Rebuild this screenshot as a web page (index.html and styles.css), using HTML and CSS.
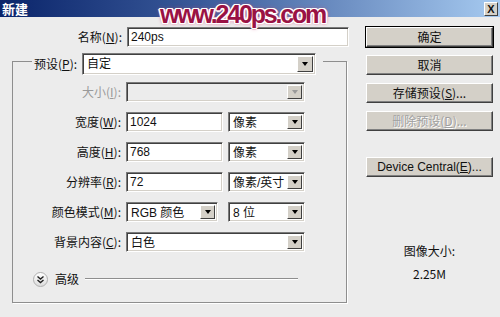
FILE: index.html
```html
<!DOCTYPE html>
<html lang="zh-CN">
<head>
    <meta charset="UTF-8">
    <title>新建</title>
    <link rel="stylesheet" href="styles.css">
</head>
<body>
    <div class="dialog">
        <div class="titlebar">
            <span class="title">新建</span>
            <span class="close-btn">X</span>
        </div>
        <div class="watermark">www.240ps.com</div>

        <div class="content">
            <div class="form">
                <div class="name-row">
                    <label>名称(<u>N</u>):</label>
                    <div class="field">240ps</div>
                </div>

                <fieldset class="group">
                    <legend class="preset">
                        <label>预设(<u>P</u>):</label>
                        <div class="select wide-preset">
                            <span class="value">自定</span>
                            <span class="arrow"></span>
                        </div>
                    </legend>

                    <div class="rows">
                        <label class="disabled">大小(<u>I</u>):</label>
                        <div class="select span2 is-disabled">
                            <span class="value"></span>
                            <span class="arrow"></span>
                        </div>

                        <label>宽度(<u>W</u>):</label>
                        <div class="field">1024</div>
                        <div class="select">
                            <span class="value">像素</span>
                            <span class="arrow"></span>
                        </div>

                        <label>高度(<u>H</u>):</label>
                        <div class="field">768</div>
                        <div class="select">
                            <span class="value">像素</span>
                            <span class="arrow"></span>
                        </div>

                        <label>分辨率(<u>R</u>):</label>
                        <div class="field">72</div>
                        <div class="select">
                            <span class="value">像素/英寸</span>
                            <span class="arrow"></span>
                        </div>

                        <label>颜色模式(<u>M</u>):</label>
                        <div class="select narrow">
                            <span class="value">RGB 颜色</span>
                            <span class="arrow"></span>
                        </div>
                        <div class="select">
                            <span class="value">8 位</span>
                            <span class="arrow"></span>
                        </div>

                        <label>背景内容(<u>C</u>):</label>
                        <div class="select span2">
                            <span class="value">白色</span>
                            <span class="arrow"></span>
                        </div>
                    </div>

                    <div class="advanced">
                        <span class="toggle">
                            <svg width="9" height="9" viewBox="0 0 9 9">
                                <path d="M1.5 1.5 L4.5 4 L7.5 1.5 M1.5 5 L4.5 7.5 L7.5 5" fill="none" stroke="#222" stroke-width="1.4"/>
                            </svg>
                        </span>
                        <span class="adv-label">高级</span>
                        <span class="adv-line"></span>
                    </div>
                </fieldset>
            </div>

            <div class="actions">
                <div class="btn default">确定</div>
                <div class="btn">取消</div>
                <div class="btn">存储预设(<u>S</u>)...</div>
                <div class="btn disabled">删除预设(<u>D</u>)...</div>
                <div class="btn device">Device Central(<u>E</u>)...</div>

                <div class="image-size">
                    <p>图像大小:</p>
                    <p>2.25M</p>
                </div>
            </div>
        </div>
    </div>
</body>
</html>
```

FILE: styles.css
```css
body {
    margin: 0;
    background-color: #ececec;
    font-family: "Liberation Sans", "Noto Sans CJK SC", sans-serif;
    font-size: 12px;
    color: #111;
}
.dialog {
    position: relative;
    width: 500px;
    height: 317px;
    overflow: hidden;
    background-color: #ececec;
}
.titlebar {
    height: 17px;
    display: flex;
    align-items: center;
    justify-content: space-between;
    padding: 0 2px 0 2px;
    background: linear-gradient(to right, #0a246a 0%, #3a5a9a 40%, #a6caf0 100%);
}
.title {
    color: white;
    font-weight: bold;
    font-family: "Noto Sans CJK SC", sans-serif;
    font-size: 13px;
    line-height: 17px;
}
.close-btn {
    width: 12px;
    height: 12px;
    line-height: 12px;
    text-align: center;
    font-size: 11px;
    font-weight: bold;
    background-color: #d4d0c8;
    border: 1px solid;
    border-color: #fff #404040 #404040 #fff;
}
.watermark {
    position: absolute;
    left: 160px;
    top: 0;
    font-family: "Liberation Sans", sans-serif;
    font-weight: bold;
    font-size: 25px;
    line-height: 28px;
    letter-spacing: -2.2px;
    color: #9a1244;
    text-shadow: 1px 0 #fff, -1px 0 #fff, 0 1px #fff, 0 -1px #fff,
        1px 1px #fff, -1px -1px #fff, 1px -1px #fff, -1px 1px #fff,
        2px 0 #f3c8d6, -2px 0 #f3c8d6, 0 2px #f3c8d6,
        0 0 4px #c0507a;
}
.content {
    display: flex;
    padding-top: 10px;
}
.form {
    width: 366px;
}
label {
    font-family: "Noto Sans CJK SC", sans-serif;
    font-size: 12px;
    line-height: 20px;
    text-align: right;
    white-space: nowrap;
}
label.disabled {
    color: #9a9a9a;
}
.name-row {
    display: grid;
    grid-template-columns: 122px 222px;
    column-gap: 5px;
    height: 20px;
}
.field {
    height: 20px;
    box-sizing: border-box;
    background-color: white;
    border: 1px solid;
    border-color: #7a7a7a #fff #fff #7a7a7a;
    box-shadow: inset 1px 1px 0 #404040, inset -1px -1px 0 #d4d0c8;
    padding: 0 3px;
    line-height: 18px;
    font-family: "Liberation Sans", "Noto Sans CJK SC", sans-serif;
    font-size: 12px;
}
.select {
    height: 20px;
    box-sizing: border-box;
    display: flex;
    background-color: white;
    border: 1px solid;
    border-color: #7a7a7a #fff #fff #7a7a7a;
    box-shadow: inset 1px 1px 0 #404040, inset -1px -1px 0 #d4d0c8;
    padding: 2px;
}
.select .value {
    flex: 1;
    padding-left: 2px;
    line-height: 16px;
    font-family: "Liberation Sans", "Noto Sans CJK SC", sans-serif;
    font-size: 12px;
    white-space: nowrap;
    overflow: hidden;
}
.select .arrow {
    width: 15px;
    box-sizing: border-box;
    background-color: #d4d0c8;
    border: 1px solid;
    border-color: #fff #404040 #404040 #fff;
    display: flex;
    align-items: center;
    justify-content: center;
}
.select .arrow::after {
    content: "";
    border-left: 3px solid transparent;
    border-right: 3px solid transparent;
    border-top: 4px solid #000;
}
.select.is-disabled {
    background-color: #ececec;
}
.select.is-disabled .arrow::after {
    border-top-color: #9a9a9a;
}
.group {
    margin: 6px 0 0 12px;
    padding: 0 0 16px 0;
    width: 335px;
    box-sizing: border-box;
    border: 1px solid #8e8e8e;
    box-shadow: 1px 1px 0 #fff;
    min-width: 0;
}
.preset {
    margin-left: 19px;
    padding: 0 7px 0 2px;
    height: 16px;
    display: flex;
    align-items: flex-start;
    column-gap: 5px;
}
.preset label {
    line-height: 22px;
}
.wide-preset {
    width: 234px;
    height: 22px;
}
.wide-preset .arrow {
    width: 16px;
}
.rows {
    display: grid;
    grid-template-columns: 108px 97px 77px;
    grid-auto-rows: 20px;
    column-gap: 5px;
    row-gap: 10px;
    padding-top: 13px;
}
.span2 {
    grid-column: span 2;
}
.narrow {
    width: 92px;
}
.advanced {
    display: flex;
    align-items: center;
    margin-top: 20px;
    padding-left: 20px;
    margin-right: 48px;
    height: 14px;
}
.toggle {
    width: 13px;
    height: 13px;
    border-radius: 50%;
    border: 1px solid #b0b0b0;
    background: linear-gradient(#fff, #dcdcdc);
    display: flex;
    align-items: center;
    justify-content: center;
}
.adv-label {
    font-family: "Noto Sans CJK SC", sans-serif;
    margin-left: 7px;
    line-height: 14px;
}
.adv-line {
    flex: 1;
    margin-left: 6px;
    border-top: 1px solid #8e8e8e;
    border-bottom: 1px solid #fff;
}
.actions {
    width: 127px;
    display: flex;
    flex-direction: column;
    gap: 8px;
}
.btn {
    height: 20px;
    box-sizing: border-box;
    background-color: #d4d0c8;
    border: 1px solid;
    border-color: #fff #404040 #404040 #fff;
    box-shadow: inset -1px -1px 0 #808080;
    text-align: center;
    line-height: 18px;
    font-family: "Noto Sans CJK SC", "Liberation Sans", sans-serif;
    font-size: 12px;
}
.btn.default {
    outline: 1px solid #000;
    outline-offset: 0;
}
.btn.disabled {
    color: #a0a0a0;
    text-shadow: 1px 1px 0 #fff;
}
.btn.device {
    margin-top: 18px;
    font-family: "Liberation Sans", sans-serif;
}
.image-size {
    margin-top: 59px;
    text-align: center;
}
.image-size p {
    margin: 0 0 9px 0;
    line-height: 14px;
    font-family: "Noto Sans CJK SC", "Liberation Sans", sans-serif;
}
```
